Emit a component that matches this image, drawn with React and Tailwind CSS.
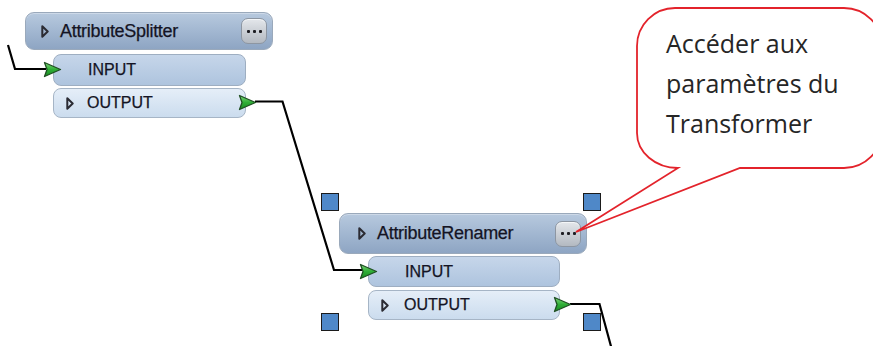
import React from 'react';

const Port = ({ className }) => (
  <svg className={`absolute ${className}`} width="19" height="17" viewBox="0 0 19 17">
    <defs>
      <linearGradient id="pg" x1="0" y1="0" x2="0" y2="1">
        <stop offset="0" stopColor="#7fd67a" />
        <stop offset="0.5" stopColor="#2fae36" />
        <stop offset="1" stopColor="#178a22" />
      </linearGradient>
    </defs>
    <path d="M1.5 1.5 L17.5 8.5 L1.5 15.5 L4 8.5 Z" fill="url(#pg)" stroke="#1f4f22" strokeWidth="1.3" strokeLinejoin="round" />
  </svg>
);

const Caret = () => (
  <svg width="8" height="13" viewBox="0 0 8 13" className="shrink-0">
    <path d="M1.3 1.3 L6.7 6.5 L1.3 11.7 Z" fill="none" stroke="#2b2b33" strokeWidth="2" strokeLinejoin="round" />
  </svg>
);

const Dots = () => (
  <div className="ml-auto w-[26px] h-[26px] rounded-[7px] border border-[#8d96a2] bg-gradient-to-b from-[#e4e7eb] to-[#b3b9c1] flex items-center justify-center gap-[3px] shadow-[inset_0_1px_0_#f4f6f8]">
    <span className="w-[3px] h-[3px] bg-[#1d1d22] rounded-[1px]" />
    <span className="w-[3px] h-[3px] bg-[#1d1d22] rounded-[1px]" />
    <span className="w-[3px] h-[3px] bg-[#1d1d22] rounded-[1px]" />
  </div>
);

const Handle = ({ className }) => (
  <div className={`absolute w-[18px] h-[18px] bg-[#4f88c8] border-[1.5px] border-[#1b1b1b] ${className}`} />
);

const label = 'text-[#141424] [-webkit-text-stroke:0.25px_#141424]';

const Node = ({ name, className, headerH, headerPad, ports }) => (
  <div className={`absolute w-[248px] flex flex-col ${className}`} style={{ fontFamily: '"Liberation Sans", Arial, sans-serif' }}>
    <div
      className={`w-full rounded-[9px] border border-[#9aa9bb] bg-gradient-to-b from-[#b7c9de] via-[#a2b7d1] to-[#8ea5c3] flex items-center pr-[5px] shadow-[inset_0_1px_0_#cdd9e8] ${headerPad}`}
      style={{ height: headerH }}
    >
      <Caret />
      <span className={`ml-[11px] text-[18px] tracking-[-0.3px] ${label}`}>{name}</span>
      <Dots />
    </div>
    {ports}
  </div>
);

export default function App() {
  return (
    <div className="relative w-[873px] h-[346px] bg-white overflow-hidden">
      <svg className="absolute inset-0" width="873" height="346">
        <polyline points="8,45 15,69 46,69" fill="none" stroke="#000" strokeWidth="2.2" />
        <polyline points="255,101.5 282.5,101.5 334,270 362,270" fill="none" stroke="#000" strokeWidth="2.2" />
        <polyline points="570,304 599.5,304 612,350" fill="none" stroke="#000" strokeWidth="2.2" />
      </svg>

      <Node
        name="AttributeSplitter"
        className="left-[25px] top-[12px]"
        headerH={38}
        headerPad="pl-[15px]"
        ports={
          <div className="ml-[28px] mt-[4px] w-[193px] flex flex-col gap-[2px]">
            <div className="relative h-[32px] rounded-[8px] border border-[#9eaec1] bg-gradient-to-b from-[#c6d6ea] to-[#aec4de] flex items-center pl-[34px]">
              <Port className="-left-[11px] top-[6px]" />
              <span className={`text-[16px] ${label}`}>INPUT</span>
            </div>
            <div className="relative h-[30px] rounded-[8px] border border-[#a6b5c6] bg-gradient-to-b from-[#e5eef8] to-[#cbdcee] flex items-center pl-[12px]">
              <Caret />
              <span className={`ml-[13px] text-[16px] ${label}`}>OUTPUT</span>
              <Port className="-right-[12px] top-[5px]" />
            </div>
          </div>
        }
      />

      <Node
        name="AttributeRenamer"
        className="left-[339px] top-[213px]"
        headerH={41}
        headerPad="pl-[18px]"
        ports={
          <div className="ml-[29px] mt-[2px] w-[192px] flex flex-col gap-[3px]">
            <div className="relative h-[31px] rounded-[8px] border border-[#9eaec1] bg-gradient-to-b from-[#c6d6ea] to-[#aec4de] flex items-center pl-[36px]">
              <Port className="-left-[10px] top-[6px]" />
              <span className={`text-[16px] ${label}`}>INPUT</span>
            </div>
            <div className="relative h-[30px] rounded-[8px] border border-[#a6b5c6] bg-gradient-to-b from-[#e5eef8] to-[#cbdcee] flex items-center pl-[12px]">
              <Caret />
              <span className={`ml-[15px] text-[16px] ${label}`}>OUTPUT</span>
              <Port className="-right-[13px] top-[5px]" />
            </div>
          </div>
        }
      />

      <Handle className="left-[321px] top-[193px]" />
      <Handle className="left-[583px] top-[193px]" />
      <Handle className="left-[321px] top-[313px]" />
      <Handle className="left-[583px] top-[313px]" />

      <svg className="absolute inset-0" width="873" height="346">
        <path
          d="M675 8 H844 A38 38 0 0 1 882 46 V130 A38 38 0 0 1 844 168 H740 L576 232 L678 168 A41 35 0 0 1 637 133 V46 A38 38 0 0 1 675 8 Z"
          fill="#fff"
          stroke="#e3232b"
          strokeWidth="1.8"
          strokeLinejoin="miter"
        />
      </svg>
      <div
        className="absolute left-[666px] top-[23px] text-[25px] leading-[40px] text-[#262626]"
        style={{ fontFamily: '"Open Sans", sans-serif' }}
      >
        <div>Accéder aux</div>
        <div>paramètres du</div>
        <div>Transformer</div>
      </div>
    </div>
  );
}
